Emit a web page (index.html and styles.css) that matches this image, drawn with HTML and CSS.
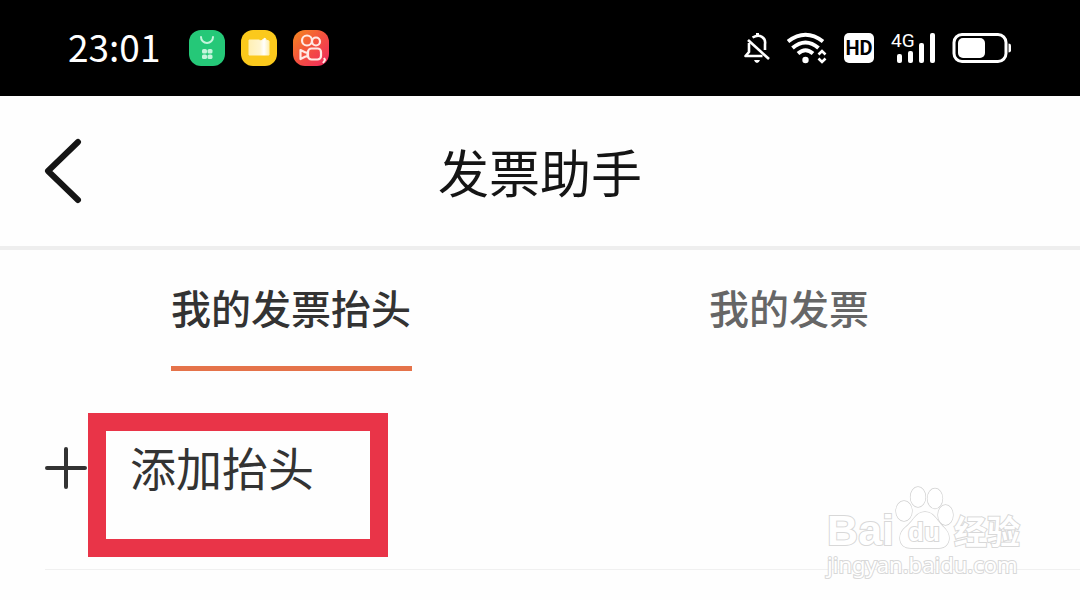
FILE: index.html
```html
<!DOCTYPE html>
<html lang="zh-CN">
<head>
<meta charset="utf-8">
<meta name="viewport" content="width=device-width, initial-scale=1">
<title>发票助手</title>
<link rel="stylesheet" href="styles.css">
</head>
<body>
<div class="status">
  <time class="clock">23:01</time>
  <div class="apps">
    <svg width="36" height="36" viewBox="0 0 36 36" aria-hidden="true">
      <rect width="36" height="36" rx="12" fill="#25c878"/>
      <path d="M12 7a6 6 0 0 0 12 0" fill="none" stroke="#c5f5dc" stroke-width="2" stroke-linecap="round"/>
      <g fill="#c5f5dc"><rect x="13" y="19" width="5" height="4.500" rx="1.6"/><rect x="18.500" y="19" width="5" height="4.500" rx="1.6"/><rect x="13" y="24.500" width="5" height="4.500" rx="1.6"/><rect x="18.500" y="24.500" width="5" height="4.500" rx="1.6"/></g>
    </svg>
    <svg width="36" height="36" viewBox="0 0 36 36" aria-hidden="true">
      <defs><linearGradient id="fold"><stop offset="0" stop-color="#fff0b5"/><stop offset=".55" stop-color="#fff5cf"/><stop offset=".75" stop-color="#fff"/><stop offset="1" stop-color="#fff0b0"/></linearGradient></defs>
      <rect width="36" height="36" rx="12" fill="#fbc91c"/>
      <path d="M8 10h10l2 1 4-3 1 2 3 1v14H8z" fill="url(#fold)" stroke="url(#fold)" stroke-linejoin="round"/>
    </svg>
    <svg width="36" height="36" viewBox="0 0 36 36" aria-hidden="true">
      <defs><linearGradient id="warm" x1="0" y1="0" x2="1" y2="1"><stop offset="0" stop-color="#f5891f"/><stop offset=".5" stop-color="#f4503f"/><stop offset="1" stop-color="#ef2860"/></linearGradient></defs>
      <rect width="36" height="36" rx="12" fill="url(#warm)"/>
      <g fill="none" stroke="#ffe9e4" stroke-width="2.200" stroke-linejoin="round"><circle cx="14" cy="10.500" r="5"/><circle cx="23" cy="11.500" r="4"/><rect x="15" y="18.500" width="13" height="11" rx="3.500"/><path d="M7.500 20l5 2.500h2v4h-2l-5 2.500z"/></g>
      <path d="M31 28l1 2-2 3" fill="none" stroke="#ffe9e4" stroke-width="2"/>
    </svg>
  </div>
  <div class="signals">
    <svg width="26" height="32" viewBox="0 0 26 32" aria-hidden="true">
      <g fill="none" stroke="#fff" stroke-width="2.600" stroke-linejoin="round"><path d="M8.500 5.500C16 1 22 6 21 12v6M5 11v9L1.500 24h17"/><path d="M4 8l21 19"/></g>
      <path d="M12 1h3v4h-3zM10 28h6q-1 3-3 3t-3-3z" fill="#fff"/>
    </svg>
    <svg width="40" height="32" viewBox="0 0 40 32" aria-hidden="true">
      <g fill="none" stroke="#fff" stroke-width="4"><path d="M1 9.500Q18.500-4 36 9.500"/><path d="M5.500 16Q18.500 5 31.500 16"/><path d="M11 21.500Q18.500 15 26 21.500"/></g>
      <circle cx="18.500" cy="28" r="3.200" fill="#fff"/>
      <path d="M31.500 22.500l3.500-3.500 3.500 3.500M31.500 26.500l3.500 3.500 3.500-3.500" fill="none" stroke="#fff" stroke-width="2.600"/>
    </svg>
    <span class="hd">HD</span>
    <span class="network">
      <span class="network-type">4G</span>
      <svg width="44" height="32" viewBox="0 0 44 32" aria-hidden="true"><g fill="#fff"><rect x="6" y="22" width="5" height="9" rx="2"/><rect x="17" y="19" width="5" height="12" rx="2"/><rect x="28" y="11" width="5" height="20" rx="2"/><rect x="39" y="1" width="5" height="30" rx="2"/></g></svg>
    </span>
    <svg width="60" height="32" viewBox="0 0 60 32" aria-hidden="true">
      <rect x="2" y="2.500" width="52" height="27" rx="8" fill="none" stroke="#fff" stroke-width="3"/>
      <rect x="6" y="6" width="27" height="20" rx="5" fill="#fff"/><path d="M56.500 11.500q2.500 0 2.500 2v5q0 2-2.500 2z" fill="#fff"/>
    </svg>
  </div>
</div>

<header class="titlebar">
  <button class="back" type="button" aria-label="返回">
    <svg width="40" height="66" viewBox="0 0 40 66" aria-hidden="true"><path d="M35 4L5 33l30 29" fill="none" stroke="#151515" stroke-width="6" stroke-linecap="round" stroke-linejoin="round"/></svg>
  </button>
  <h1 class="title">发票助手</h1>
</header>

<nav class="tabs">
  <a class="tab active" href="#titles">我的发票抬头</a>
  <a class="tab" href="#invoices">我的发票</a>
</nav>

<main class="content" id="titles">
  <button class="add" type="button">
    <svg class="plus" width="42" height="42" viewBox="0 0 42 42" aria-hidden="true"><path d="M21 2v38M2 21h38" stroke="#333" stroke-width="4" stroke-linecap="round"/></svg>
    <span class="highlight">添加抬头</span>
  </button>
</main>

<div class="watermark">
  <div class="brand">
    <span>Bai</span>
    <span class="paw">
      <svg width="60" height="66" viewBox="0 0 60 66" aria-hidden="true"><g fill="#fff" stroke="#d0d0d0" stroke-width="1.300"><ellipse cx="10" cy="28" rx="8" ry="10"/><ellipse cx="24" cy="14" rx="7.500" ry="10"/><ellipse cx="41" cy="15.500" rx="7.500" ry="10"/><ellipse cx="51.500" cy="32" rx="7.500" ry="10"/><path d="M31 29c-7 0-10 5-14 10C12 45 6 47 6 55c0 7 5 10 11 10h28c6 0 10-4 10-10 0-8-6-10-10-16-4-5-7-10-14-10z"/></g></svg>
      <span class="du">du</span>
    </span>
    <span class="jingyan">经验</span>
  </div>
  <div class="domain">jingyan.baidu.com</div>
</div>
</body>
</html>
```
FILE: styles.css
```css
* {
  box-sizing: border-box;
}

body {
  margin: 0;
  min-height: 100vh;
  position: relative;
  background: #fefefe;
  color: #333;
  font-family: "Noto Sans CJK SC", sans-serif;
}

button {
  padding: 0;
  border: 0;
  background: none;
  color: inherit;
  font: inherit;
  cursor: pointer;
}

svg {
  display: block;
  flex: none;
}

.status {
  display: flex;
  align-items: center;
  height: 96px;
  padding: 0 68px;
  background: #000;
  color: #fff;
}

.clock {
  padding-bottom: 4px;
  font-size: 37px;
  line-height: 48px;
}

.apps {
  display: flex;
  gap: 16px;
  margin-left: 29px;
}

.signals {
  display: flex;
  align-items: center;
  gap: 17px;
  margin-left: auto;
}

.hd {
  width: 30px;
  border-radius: 5px;
  background: #fff;
  color: #000;
  font: bold 20px/30px Roboto, sans-serif;
  text-align: center;
}

.network {
  position: relative;
}

.network-type {
  position: absolute;
  top: 0;
  left: 0;
  font: 400 19px/18px Roboto, sans-serif;
}

.titlebar {
  display: grid;
  grid-template-columns: 1fr auto 1fr;
  align-items: center;
  height: 154px;
  padding: 0 43px;
  border-bottom: 4px solid #eee;
}

.back {
  justify-self: start;
}

.title {
  margin: 0;
  color: #151515;
  font-size: 51px;
  font-weight: 400;
  line-height: 64px;
}

.tabs {
  display: flex;
  padding: 0 42px;
}

.tab {
  flex: 1;
  display: flex;
  justify-content: center;
  padding-bottom: 7px;
  color: #666;
  font-size: 40px;
  font-weight: 500;
  line-height: 114px;
  text-decoration: none;
}

.active {
  color: #333;
}

.tabs .active {
  background: linear-gradient(#e5734a, #e5734a) center bottom / 241px 5px no-repeat;
}

.content {
  margin-top: 42px;
  margin-left: 45px;
  padding-bottom: 12px;
  border-bottom: 1px solid #f0f0f0;
}

.add {
  display: flex;
  align-items: flex-start;
  gap: 1px;
}

.plus {
  margin-top: 34px;
}

.highlight {
  display: block;
  padding: 6px 56px 44px 24px;
  border: 18px solid #e93448;
  font-size: 46px;
  line-height: 58px;
}

.watermark {
  position: absolute;
  right: 60px;
  bottom: 24px;
  color: #fff;
  -webkit-text-stroke: 2px #d8d8d8;
  paint-order: stroke fill;
}

.brand {
  display: flex;
  align-items: flex-end;
  height: 66px;
  margin-bottom: 3px;
  font: 700 43px/38px "Liberation Sans", sans-serif;
}

.paw {
  position: relative;
}

.du {
  position: absolute;
  left: 0;
  right: 0;
  bottom: 4px;
  font-size: 26px;
  line-height: 26px;
  text-align: center;
}

.jingyan {
  padding-bottom: 2px;
  font-family: "Noto Sans CJK SC", sans-serif;
  font-size: 33px;
  line-height: 34px;
}

.domain {
  font-family: "Noto Sans", sans-serif;
  font-size: 22px;
  line-height: 24px;
}
```
